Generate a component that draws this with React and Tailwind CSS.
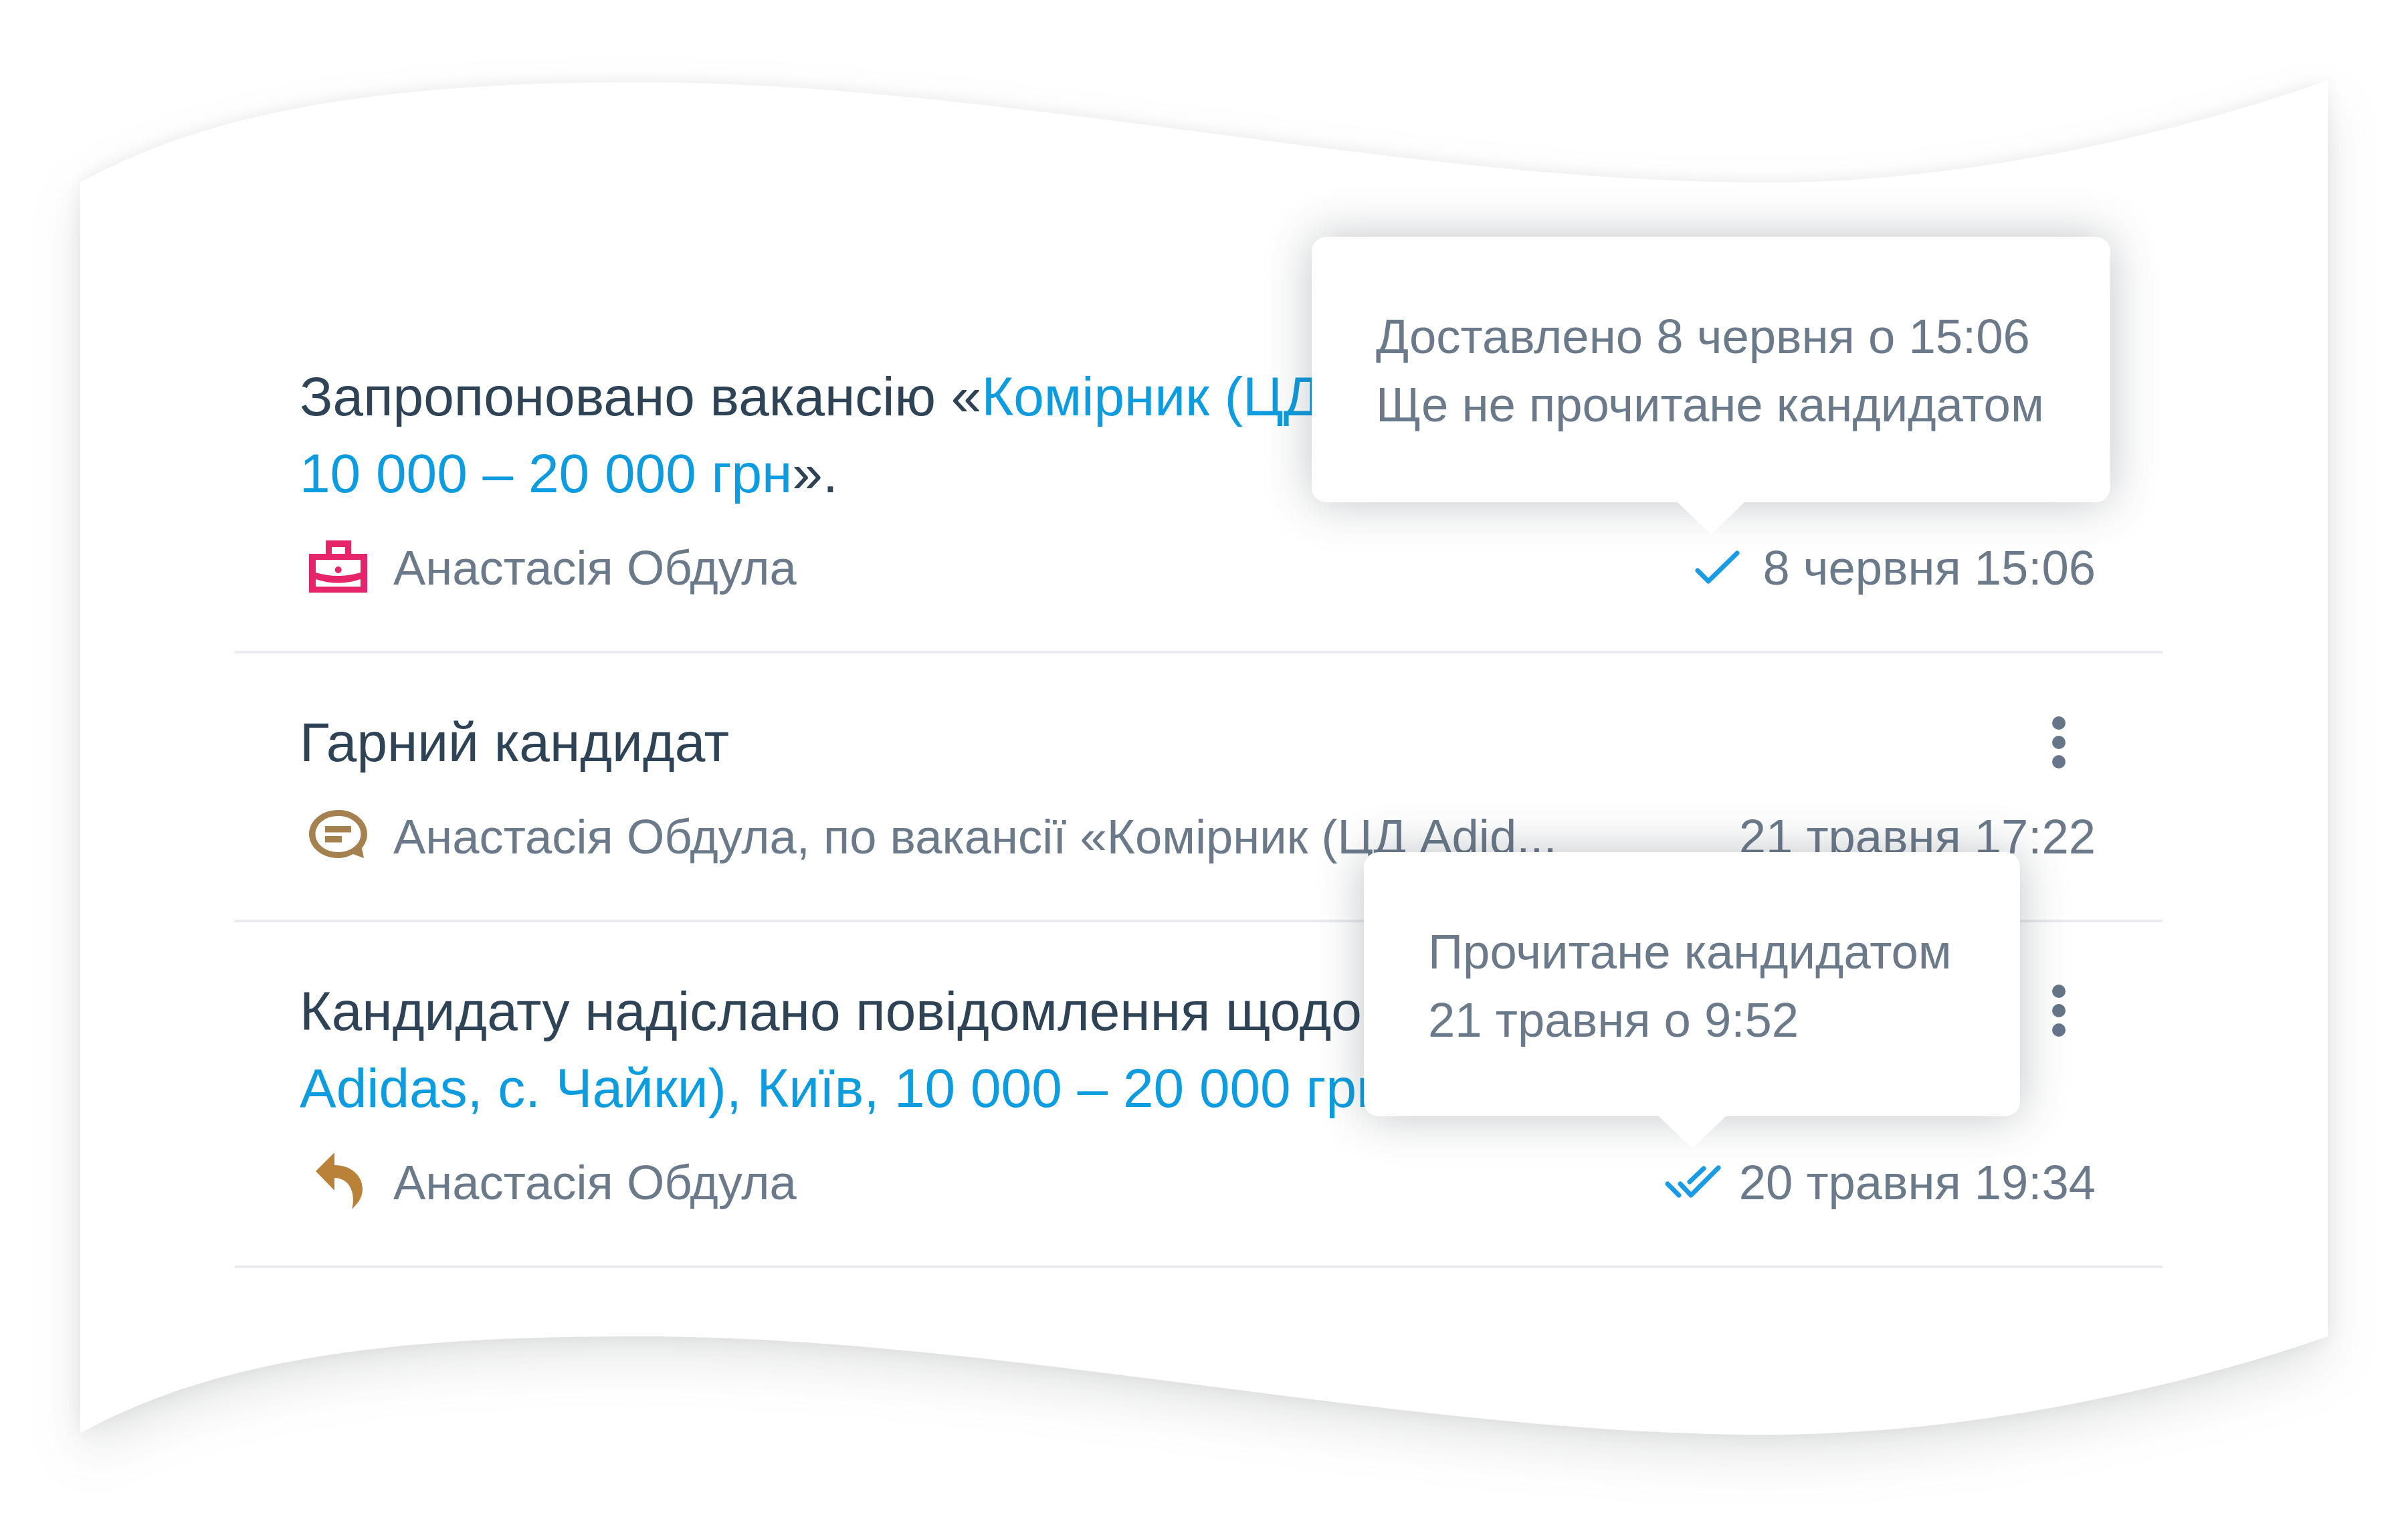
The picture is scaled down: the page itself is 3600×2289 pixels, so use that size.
const Briefcase = () => (
  <svg width="87" height="78" viewBox="0 0 87 78" className="block -mt-[6px]">
    <path fill="#e5246a" fillRule="evenodd" d="M25 0H63V20H87V78H0V20H25ZM34 10V20H54V10ZM10 29V48Q43.5 58 77 48V29ZM10 58V69H77V58Q43.5 69 10 58Z" />
    <circle cx="43.7" cy="44" r="5" fill="#e5246a" />
  </svg>
);
const Bubble = () => (
  <svg width="87" height="72" viewBox="0 0 87 72" className="block -mt-[10px]">
    <path fill="#a5814f" fillRule="evenodd" d="M43.5 0C67.5 0 87 16 87 36C87 44 84 51 79 57L82 72L66 66C59 70 51 72 43.5 72C19.5 72 0 56 0 36C0 16 19.5 0 43.5 0ZM43.5 9C24.5 9 9.5 21 9.5 36C9.5 51 24.5 63 43.5 63C62.5 63 77.500 51 77.500 36C77.500 21 62.500 9 43.500 9Z" />
    <rect x="24" y="24" width="39" height="9.500" fill="#a5814f" />
    <rect x="24" y="39" width="25" height="9.500" fill="#a5814f" />
  </svg>
);
const Reply = () => (
  <svg width="70" height="85" viewBox="472 1723 70 85" className="block ml-[10px] -mt-[6px]">
    <path fill="#b98238" d="M472 1751L500 1723V1742C525 1742 542 1758 542 1778C542 1792 533 1801 526 1808C531 1790 527 1762 500 1761V1780Z" />
  </svg>
);
const Check = () => (
  <svg width="59" height="42" viewBox="2538 827 59 42" className="block overflow-visible -mt-[4px] mr-[38px]">
    <path fill="none" stroke="#1a9be6" strokeWidth="7" strokeLinecap="round" strokeLinejoin="round" d="M2538 853L2554 869L2597 827" />
  </svg>
);
const DoubleCheck = () => (
  <svg width="78" height="42" viewBox="2493 1746 78 42" className="block overflow-visible -mt-[4px] mr-[31px]">
    <path fill="none" stroke="#1a9be6" strokeWidth="7" strokeLinecap="round" strokeLinejoin="round" d="M2495 1770L2512 1787M2514 1770L2530 1787L2571 1746M2528 1767L2549 1747" />
  </svg>
);
const Dots = () => (
  <div className="flex flex-col gap-[9px] mr-[145px] shrink-0">
    <span className="block w-[20px] h-[20px] rounded-full bg-[#66758a]" />
    <span className="block w-[20px] h-[20px] rounded-full bg-[#66758a]" />
    <span className="block w-[20px] h-[20px] rounded-full bg-[#66758a]" />
  </div>
);
const Tooltip = ({ className, tail, children }) => (
  <div className={"absolute z-10 bg-white rounded-[22px] shadow-[0_0_70px_rgba(50,60,70,0.3)] pt-[98px] pl-[96px] text-[72.5px] leading-[102px] text-[#6b7a8a] whitespace-nowrap " + className}>
    {children}
    <div className={"absolute top-full w-0 h-0 border-x-[50px] border-t-[48px] border-x-transparent border-t-white " + tail} />
  </div>
);
const Meta = ({ icon, children, check, date }) => (
  <div className="flex items-center mt-[27px] pr-[100px] h-[115px] text-[72.4px] text-[#6b7a8a] whitespace-nowrap">
    <div className="w-[140px] pl-[14px] shrink-0">{icon}</div>
    <div className="flex-1">{children}</div>
    {check}
    <div>{date}</div>
  </div>
);
const Link = ({ children }) => <span className="text-[#0e9ce0]">{children}</span>;

export default function App() {
  return (
    <div className="relative w-[3600px] h-[2289px] bg-white overflow-hidden font-['Liberation_Sans',Arial,sans-serif]">
      <svg width="3600" height="2289" viewBox="0 0 3600 2289" className="absolute left-0 top-0 [filter:drop-shadow(0_34px_36px_rgba(60,70,70,0.13))_drop-shadow(0_0_14px_rgba(0,0,0,0.07))]">
        <path fill="#ffffff" d="M120 273C340 150 640 123 953 123C1500 123 2100 273 2640 273C2950 273 3270 195 3480 120V1998C3270 2072 2950 2145 2640 2145C2100 2145 1500 1998 953 1998C640 1998 340 2020 120 2143Z" />
      </svg>
      <div className="relative pt-[460px] pl-[351px] w-[3233px]">
        <div className="relative pt-[75px] pb-[66px] pl-[97px] border-b-[4px] border-[#e9ebee]">
          <div className="flex justify-between text-[82px] leading-[115px] text-[#2f4357] whitespace-nowrap">
            <div>
              Запропоновано вакансію «<Link>Комірник (ЦД Adidas, с. Чайки), Київ,</Link>
              <br />
              <Link>10 000 – 20 000 грн</Link>».
            </div>
          </div>
          <Meta icon={<Briefcase />} check={<Check />} date="8 червня 15:06">Анастасія Обдула</Meta>
          <Tooltip className="left-[1610px] top-[-106px] w-[1194px] h-[397px]" tail="left-[547px]">
            Доставлено 8 червня о 15:06
            <br />
            Ще не прочитане кандидатом
          </Tooltip>
        </div>
        <div className="relative pt-[75px] pb-[66px] pl-[97px] border-b-[4px] border-[#e9ebee]">
          <div className="flex justify-between items-center text-[82px] leading-[115px] text-[#2f4357] whitespace-nowrap">
            <div>Гарний кандидат</div>
            <Dots />
          </div>
          <Meta icon={<Bubble />} date="21 травня 17:22">Анастасія Обдула, по вакансії «Комірник (ЦД Adid...</Meta>
        </div>
        <div className="relative pt-[75px] pb-[66px] pl-[97px] border-b-[4px] border-[#e9ebee]">
          <div className="flex justify-between items-start text-[82px] leading-[115px] text-[#2f4357] whitespace-nowrap">
            <div>
              Кандидату надіслано повідомлення щодо вакансії «<Link>Комірник (ЦД</Link>
              <br />
              <Link>Adidas, с. Чайки), Київ, 10 000 – 20 000 грн</Link>».
            </div>
            <div className="pt-[18px]"><Dots /></div>
          </div>
          <Meta icon={<Reply />} check={<DoubleCheck />} date="20 травня 19:34">Анастасія Обдула</Meta>
          <Tooltip className="left-[1688px] top-[-105px] w-[981px] h-[395px]" tail="left-[441px]">
            Прочитане кандидатом
            <br />
            21 травня о 9:52
          </Tooltip>
        </div>
      </div>
    </div>
  );
}
